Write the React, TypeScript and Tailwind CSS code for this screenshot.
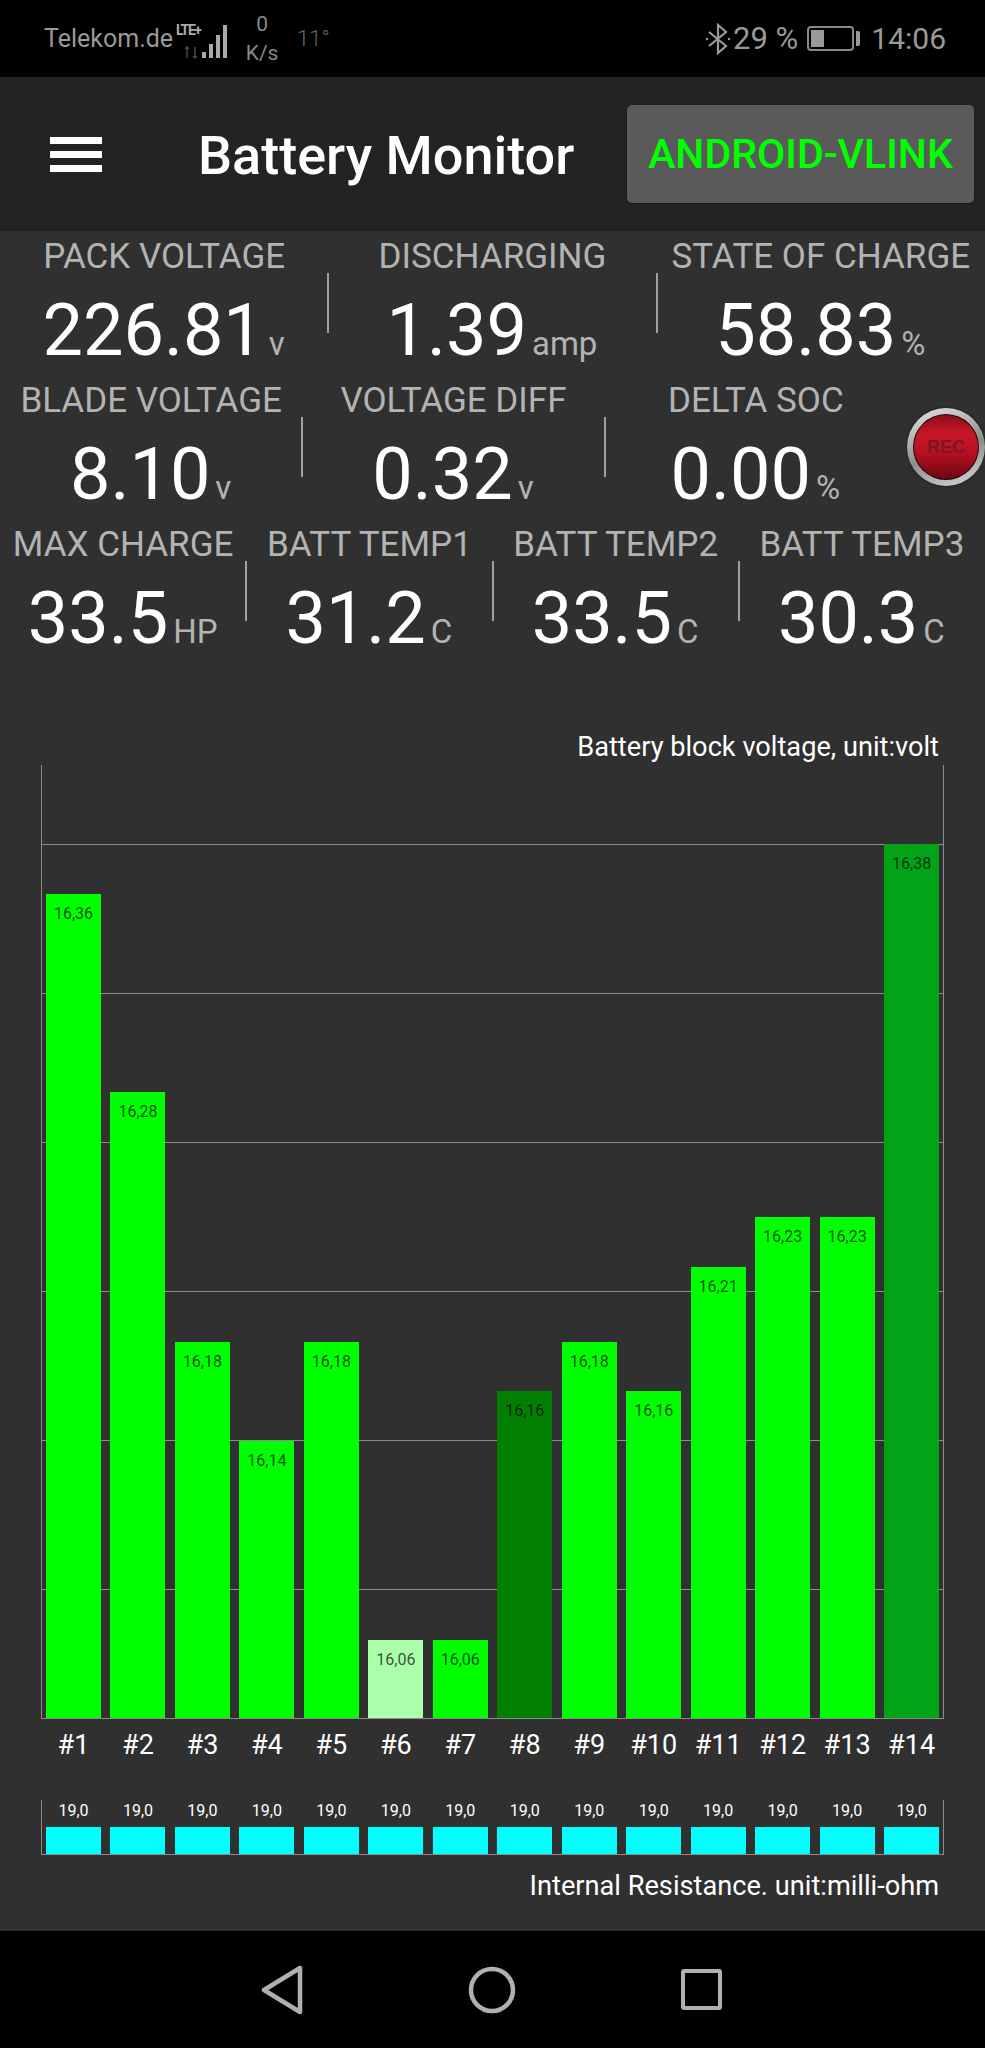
const stats = [
  {
    items: [
      { label: "PACK VOLTAGE", value: "226.81", unit: "v" },
      { label: "DISCHARGING", value: "1.39", unit: "amp" },
      { label: "STATE OF CHARGE", value: "58.83", unit: "%" },
    ],
    rec: false,
  },
  {
    items: [
      { label: "BLADE VOLTAGE", value: "8.10", unit: "v" },
      { label: "VOLTAGE DIFF", value: "0.32", unit: "v" },
      { label: "DELTA SOC", value: "0.00", unit: "%" },
    ],
    rec: true,
  },
  {
    items: [
      { label: "MAX CHARGE", value: "33.5", unit: "HP" },
      { label: "BATT TEMP1", value: "31.2", unit: "C" },
      { label: "BATT TEMP2", value: "33.5", unit: "C" },
      { label: "BATT TEMP3", value: "30.3", unit: "C" },
    ],
    rec: false,
  },
];

const cells = [
  { name: "#1", value: "16,36", h: 824, color: "#00ff00" },
  { name: "#2", value: "16,28", h: 626, color: "#00ff00" },
  { name: "#3", value: "16,18", h: 376, color: "#00ff00" },
  { name: "#4", value: "16,14", h: 277, color: "#00ff00" },
  { name: "#5", value: "16,18", h: 376, color: "#00ff00" },
  { name: "#6", value: "16,06", h: 78, color: "#aaffaa" },
  { name: "#7", value: "16,06", h: 78, color: "#00ff00" },
  { name: "#8", value: "16,16", h: 327, color: "#007f00" },
  { name: "#9", value: "16,18", h: 376, color: "#00ff00" },
  { name: "#10", value: "16,16", h: 327, color: "#00ff00" },
  { name: "#11", value: "16,21", h: 451, color: "#00ff00" },
  { name: "#12", value: "16,23", h: 501, color: "#00ff00" },
  { name: "#13", value: "16,23", h: 501, color: "#00ff00" },
  { name: "#14", value: "16,38", h: 874, color: "#03a318" },
];

const gridLines = [79, 228, 377, 526, 675, 824];

function StatusBar() {
  return (
    <div className="h-[77px] bg-black flex items-center pl-[44px] pr-[39px] text-[#999999] shrink-0">
      <span className="text-[25px] leading-none">Telekom.de</span>
      <svg width="58" height="40" viewBox="0 0 58 40" className="ml-[2px]">
        <text x="1" y="16" fontSize="14" fontWeight="700" fill="#aaaaaa" fontFamily="Roboto" textLength="26">
          LTE+
        </text>
        <path d="M12 28v11M10 30l2-2 2 2M20 39V28M18 37l2 2 2-2" stroke="#444444" strokeWidth="1.6" fill="none" />
        <rect x="27" y="33" width="4" height="6" fill="#aaaaaa" />
        <rect x="34" y="25" width="4" height="14" fill="#aaaaaa" />
        <rect x="41" y="16" width="4" height="23" fill="#aaaaaa" />
        <rect x="48" y="6" width="4" height="33" fill="#aaaaaa" />
      </svg>
      <div className="w-[44px] ml-[7px] flex flex-col items-center text-[21px] leading-[29px] text-[#888888]">
        <span>0</span>
        <span>K/s</span>
      </div>
      <span className="ml-[13px] text-[22px] font-light text-[#666666]">11°</span>
      <div className="ml-auto flex items-center">
        <svg width="26" height="32" viewBox="0 0 26 32" fill="none" stroke="#999999" strokeWidth="2.2">
          <path d="M4 9l17 14-8 7V2l8 7L4 23" />
          <circle cx="2" cy="16" r="1.2" fill="#999999" stroke="none" />
          <circle cx="24" cy="16" r="1.2" fill="#999999" stroke="none" />
        </svg>
        <span className="ml-[2px] text-[31px] leading-none">29 %</span>
        <div className="ml-[9px] w-[47px] h-[25px] rounded-[4px] border-2 border-[#888888] p-[2px]">
          <div className="w-[13px] h-full bg-[#999999]" />
        </div>
        <div className="ml-[2px] w-[4px] h-[15px] rounded-r-[2px] bg-[#999999]" />
        <span className="ml-[11px] text-[30px] leading-none">14:06</span>
      </div>
    </div>
  );
}

function Toolbar() {
  return (
    <div className="h-[154px] bg-[#232323] flex items-center pl-[50px] pr-[11px] shrink-0">
      <div className="w-[52px] flex flex-col gap-[7px]">
        <div className="h-[7px] bg-white" />
        <div className="h-[7px] bg-white" />
        <div className="h-[7px] bg-white" />
      </div>
      <h1 className="ml-[96px] pt-[3px] text-[54px] leading-none font-medium text-white whitespace-nowrap">Battery Monitor</h1>
      <button className="ml-auto w-[347px] h-[98px] rounded-[5px] bg-[#5a5a5a] text-[#00ff00] text-[41px] font-medium leading-none shadow-[0_1px_2px_rgba(0,0,0,0.4)]">
        ANDROID-VLINK
      </button>
    </div>
  );
}

function RecButton() {
  return (
    <div className="w-[78px] shrink-0 self-center flex justify-center">
      <div className="w-[78px] h-[78px] rounded-full bg-[linear-gradient(160deg,#e8e8e8,#8d8d8d_55%,#dcdcdc)] p-[6px] shadow-[0_0_3px_rgba(0,0,0,0.6)]">
        <div className="w-full h-full rounded-full bg-[#1a0508] p-[1px]">
          <div className="w-full h-full rounded-full bg-[linear-gradient(180deg,#8f0c18,#c8182a_30%,#b5101f_60%,#6e0610)] flex items-center justify-center">
            <span className="font-['Liberation_Sans',sans-serif] font-bold text-[18px] leading-none text-[#7c1524]">REC</span>
          </div>
        </div>
      </div>
    </div>
  );
}

function Stats() {
  return (
    <div className="shrink-0">
      {stats.map((row, i) => (
        <div key={i} className="h-[144px] flex">
          {row.items.map((item, j) => (
            <div key={item.label} className="flex-1 flex min-w-0">
              {j > 0 && <div className="w-[2px] h-[60px] mt-[42px] -ml-[1px] -mr-[1px] bg-[#a0a0a0] shrink-0" />}
              <div className="flex-1 min-w-0 flex flex-col items-center">
                <div className="h-[51px] text-[35px] leading-[51px] text-[#b3b3b3] whitespace-nowrap">{item.label}</div>
                <div className="mt-[13px] flex items-baseline gap-[5px] whitespace-nowrap -ml-[1px]">
                  <span className="text-[72px] leading-[72px] text-white">{item.value}</span>
                  <span className="text-[33px] leading-none text-[#b3b3b3]">{item.unit}</span>
                </div>
              </div>
            </div>
          ))}
          {row.rec && <RecButton />}
        </div>
      ))}
    </div>
  );
}

function VoltageChart() {
  return (
    <div className="mt-[68px] pl-[41px] pr-[41px]">
      <div className="h-[32px] pr-[5px] text-right text-[27.2px] leading-[32px] text-white whitespace-nowrap">Battery block voltage, unit:volt</div>
      <div className="relative mt-[2px] h-[954px] border-l border-r border-b border-[#8c8c8c] flex items-end gap-[9.5px] px-[4px]">
        {gridLines.map((top) => (
          <div key={top} className="absolute left-0 right-0 h-px bg-[#8c8c8c]" style={{ top }} />
        ))}
        {cells.map((c) => (
          <div key={c.name} className="relative flex-1 pt-[12px] text-center text-[16px] leading-[16px] text-black/70" style={{ height: c.h, backgroundColor: c.color }}>
            {c.value}
          </div>
        ))}
      </div>
      <div className="flex gap-[9.5px] px-[5px] h-[81px]">
        {cells.map((c) => (
          <div key={c.name} className="flex-1 text-center text-[27px] leading-[52px] text-white whitespace-nowrap">
            {c.name}
          </div>
        ))}
      </div>
    </div>
  );
}

function ResistanceChart() {
  return (
    <div className="pl-[41px] pr-[41px]">
      <div className="h-[55px] border-l border-r border-b border-[#8c8c8c] flex gap-[9.5px] px-[4px]">
        {cells.map((c) => (
          <div key={c.name} className="flex-1 flex flex-col">
            <div className="h-[27px] pb-[6px] text-center text-[16px] leading-[21px] text-white">19,0</div>
            <div className="h-[27px] bg-[#00ffff]" />
          </div>
        ))}
      </div>
      <div className="mt-[15px] pr-[5px] text-right text-[27.2px] leading-[32px] text-white whitespace-nowrap">Internal Resistance. unit:milli-ohm</div>
    </div>
  );
}

function NavBar() {
  return (
    <div className="h-[117px] bg-black flex items-center justify-center shrink-0">
      <svg width="44" height="50" viewBox="0 0 44 50" fill="none" stroke="#b0b0b0" strokeWidth="4.5" strokeLinejoin="round" className="ml-[-4px]">
        <path d="M4 25L40 3V47Z" />
      </svg>
      <svg width="48" height="48" viewBox="0 0 48 48" fill="none" stroke="#b0b0b0" strokeWidth="4.5" className="ml-[164px]">
        <circle cx="24" cy="24" r="21" />
      </svg>
      <div className="ml-[165px] w-[41px] h-[41px] border-[4px] rounded-[3px] border-[#b0b0b0]" />
    </div>
  );
}

export default function App() {
  return (
    <div className="w-[985px] h-[2048px] flex flex-col overflow-hidden bg-[#303030] font-[Roboto,sans-serif]">
      <StatusBar />
      <Toolbar />
      <div className="flex-1">
        <Stats />
        <VoltageChart />
        <ResistanceChart />
      </div>
      <NavBar />
    </div>
  );
}
